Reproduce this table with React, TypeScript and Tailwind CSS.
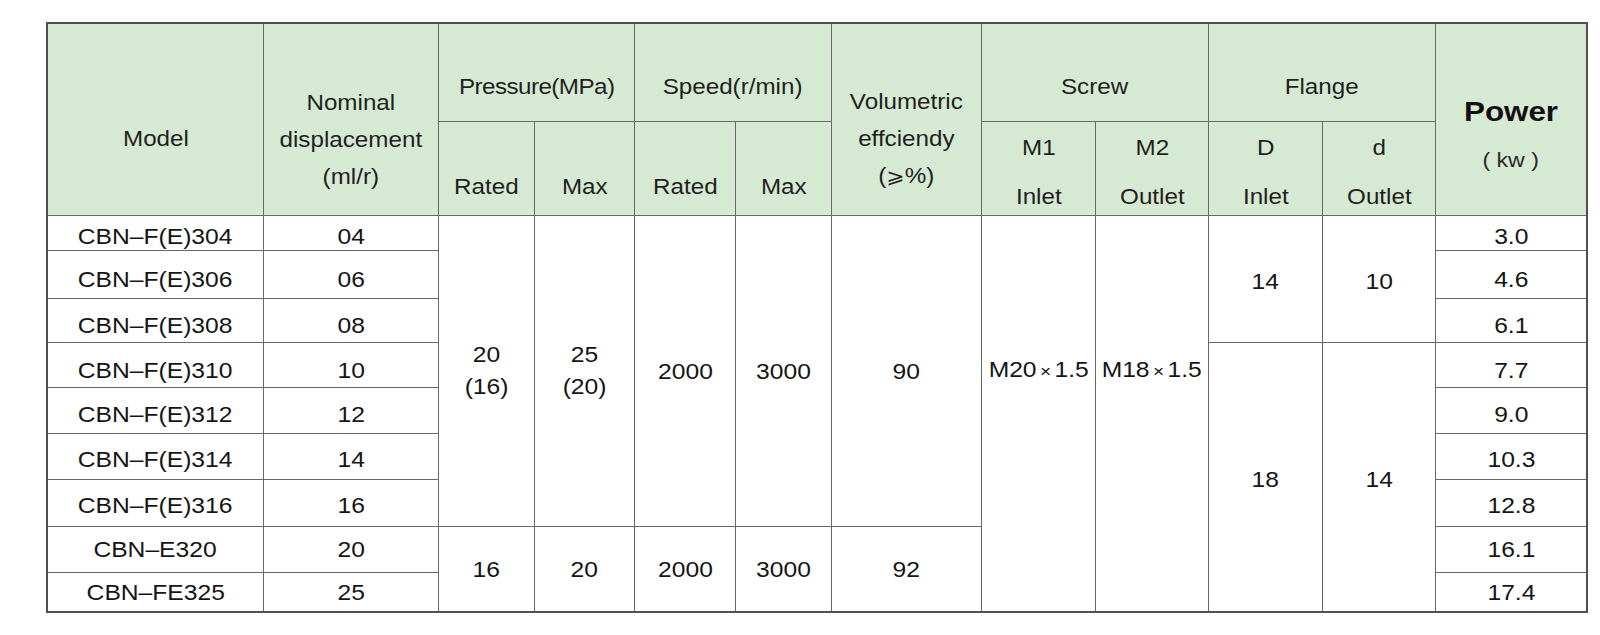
import React from "react";

type Props = { className?: string; children?: React.ReactNode };

function Head({ className = "", children }: Props) {
    return (
        <div className={`flex justify-center items-start bg-[#d6e9d3] text-[22px] leading-[37px] text-[#1f1f1f] ${className}`}>
            <div className="scale-x-110 text-center">{children}</div>
        </div>
    );
}

function Cell({ className = "", children }: Props) {
    return (
        <div className={`flex justify-center bg-white text-[22px] text-[#151515] ${className}`}>
            <div className="scale-x-112 text-center">{children}</div>
        </div>
    );
}

const rows = [
    { model: "CBN–F(E)304", disp: "04", power: "3.0", pos: "row-start-3 pt-[6px]" },
    { model: "CBN–F(E)306", disp: "06", power: "4.6", pos: "row-start-4 pt-[10px]" },
    { model: "CBN–F(E)308", disp: "08", power: "6.1", pos: "row-start-5 pt-[10px]" },
    { model: "CBN–F(E)310", disp: "10", power: "7.7", pos: "row-start-6 pt-[10px]" },
    { model: "CBN–F(E)312", disp: "12", power: "9.0", pos: "row-start-7 pt-[8px]" },
    { model: "CBN–F(E)314", disp: "14", power: "10.3", pos: "row-start-8 pt-[6px]" },
    { model: "CBN–F(E)316", disp: "16", power: "12.8", pos: "row-start-9 pt-[4px]" },
    { model: "CBN–E320", disp: "20", power: "16.1", pos: "row-start-10" },
    { model: "CBN–FE325", disp: "25", power: "17.4", pos: "row-start-11" },
];

export default function App() {
    return (
        <div className="w-[1600px] h-[635px] bg-white pt-[22px] pl-[46px] font-['Liberation_Sans',Arial,sans-serif]">
            <div className="inline-grid gap-px bg-[#696969] border-2 border-[#505050] grid-cols-[215px_174px_95px_99px_100px_95px_149px_113px_112px_113px_112px_150px] grid-rows-[97px_93px_34px_47px_43px_44px_45px_45px_46px_45px_38px]">
                {/* header */}
                <Head className="col-start-1 row-start-1 row-span-2 pt-[96px]">Model</Head>
                <Head className="col-start-2 row-start-1 row-span-2 pt-[60px]">
                    Nominal<br />displacement<br />(ml/r)
                </Head>
                <Head className="col-start-3 col-span-2 row-start-1 pt-[44px] tracking-[-0.5px]">Pressure(MPa)</Head>
                <Head className="col-start-5 col-span-2 row-start-1 pt-[44px]">Speed(r/min)</Head>
                <Head className="col-start-7 row-start-1 row-span-2 pt-[59px]">
                    Volumetric<br />effciendy<br />(<span className="font-['DejaVu_Sans',sans-serif] text-[20px]">⩾</span>%)
                </Head>
                <Head className="col-start-8 col-span-2 row-start-1 pt-[44px]">Screw</Head>
                <Head className="col-start-10 col-span-2 row-start-1 pt-[44px]">Flange</Head>
                <div className="col-start-12 row-start-1 row-span-2 flex flex-col items-center bg-[#d6e9d3] pt-[68px] text-[#111]">
                    <div className="scale-x-112 text-[28px] leading-[40px] font-bold">Power</div>
                    <div className="scale-x-110 mt-[13px] text-[21px] leading-[30px] text-[#2a2a2a]">( kw )</div>
                </div>

                <Head className="col-start-3 row-start-2 pt-[46px]">Rated</Head>
                <Head className="col-start-4 row-start-2 pt-[46px]">Max</Head>
                <Head className="col-start-5 row-start-2 pt-[46px]">Rated</Head>
                <Head className="col-start-6 row-start-2 pt-[46px]">Max</Head>
                <Head className="col-start-8 row-start-2 pt-[1px] leading-[49px]">M1<br />Inlet</Head>
                <Head className="col-start-9 row-start-2 pt-[1px] leading-[49px]">M2<br />Outlet</Head>
                <Head className="col-start-10 row-start-2 pt-[1px] leading-[49px]">D<br />Inlet</Head>
                <Head className="col-start-11 row-start-2 pt-[1px] leading-[49px]">d<br />Outlet</Head>

                {/* body */}
                {rows.map((r) => (
                    <React.Fragment key={r.model}>
                        <Cell className={`col-start-1 items-center ${r.pos}`}>{r.model}</Cell>
                        <Cell className={`col-start-2 items-center ${r.pos}`}>{r.disp}</Cell>
                        <Cell className={`col-start-12 items-center ${r.pos}`}>{r.power}</Cell>
                    </React.Fragment>
                ))}

                <Cell className="col-start-3 row-start-3 row-span-7 items-center leading-[32px]">20<br />(16)</Cell>
                <Cell className="col-start-4 row-start-3 row-span-7 items-center leading-[32px]">25<br />(20)</Cell>
                <Cell className="col-start-5 row-start-3 row-span-7 items-center">2000</Cell>
                <Cell className="col-start-6 row-start-3 row-span-7 items-center">3000</Cell>
                <Cell className="col-start-7 row-start-3 row-span-7 items-center">90</Cell>

                <Cell className="col-start-3 row-start-10 row-span-2 items-center">16</Cell>
                <Cell className="col-start-4 row-start-10 row-span-2 items-center">20</Cell>
                <Cell className="col-start-5 row-start-10 row-span-2 items-center">2000</Cell>
                <Cell className="col-start-6 row-start-10 row-span-2 items-center">3000</Cell>
                <Cell className="col-start-7 row-start-10 row-span-2 items-center">92</Cell>

                <Cell className="col-start-8 row-start-3 row-span-9 items-start pt-[139px] leading-[30px] text-[20px]">
                    M20<span className="mx-[3px] text-[17px]">×</span>1.5
                </Cell>
                <Cell className="col-start-9 row-start-3 row-span-9 items-start pt-[139px] leading-[30px] text-[20px]">
                    M18<span className="mx-[3px] text-[17px]">×</span>1.5
                </Cell>

                <Cell className="col-start-10 row-start-3 row-span-3 items-center pt-[4px]">14</Cell>
                <Cell className="col-start-11 row-start-3 row-span-3 items-center pt-[4px]">10</Cell>
                <Cell className="col-start-10 row-start-6 row-span-6 items-center pt-[4px]">18</Cell>
                <Cell className="col-start-11 row-start-6 row-span-6 items-center pt-[4px]">14</Cell>
            </div>
        </div>
    );
}
